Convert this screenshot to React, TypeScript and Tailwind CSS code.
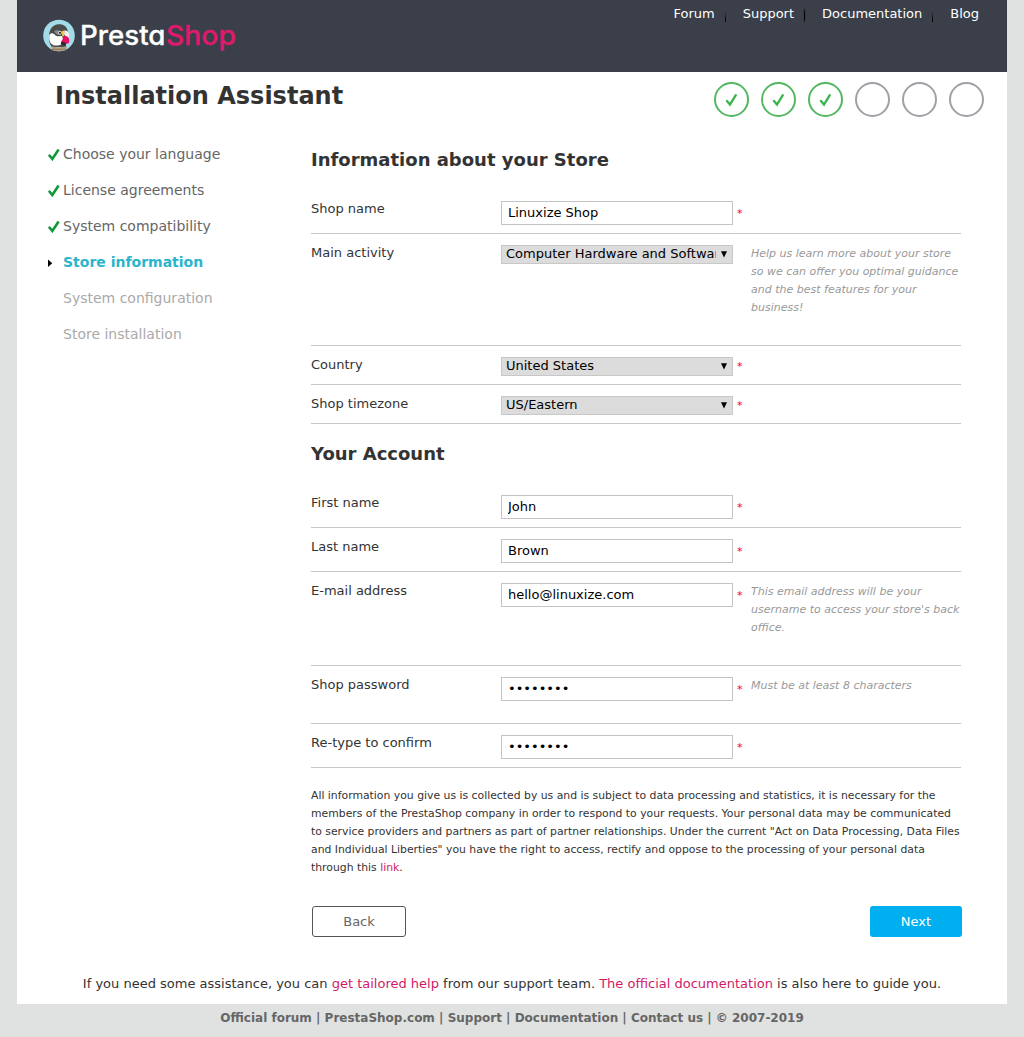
import type { ReactNode } from 'react';

function Logo() {
  return (
    <svg width="200" height="40" viewBox="0 0 200 40" role="img" aria-label="PrestaShop">
      <defs>
        <clipPath id="badge">
          <circle cx="17" cy="17.5" r="15.8" />
        </clipPath>
      </defs>
      <circle cx="17" cy="17.5" r="15.8" fill="#a4dbe8" />
      <g clipPath="url(#badge)">
        <path d="M7 20C6.500 12 10.500 6.300 17 6.300C22 6.300 25 9 25.800 13L24 20V29H10C8 27 7 24 7 20Z" fill="#4a4b4b" />
        <path d="M7.300 17C9 14.500 11.500 15 13.500 17.500C15.500 19 18 17.500 20 18L21 21L20 26C16 28.500 11 28 8.500 25C7.300 23 7 20 7.300 17Z" fill="#fff" />
        <path d="M12 13.200C14 11.800 17 12 19.500 13.800L19 16.800C16.500 17.500 14 16.500 12 13.200Z" fill="#85888a" />
        <path d="M20 13L22.300 12.500L23 16L20.800 19L20 17Z" fill="#f3c74f" />
        <path d="M22.300 12.500C25.500 12 27.500 14.500 27 19L24 19.500L22.500 17Z" fill="#eef3f2" />
        <path d="M22.800 17.500C26.500 18.500 28 21 27 25L24.500 25.800L19.300 23.500Z" fill="#ea1064" />
        <path d="M19.300 23.200L24.500 25.300L23 27.500L18.800 26.500Z" fill="#34242b" />
        <path d="M9.500 28.300C14 29.800 20 29.800 24.500 28.300V35H9.500Z" fill="#b39a7c" />
        <path d="M9.500 31.300H24.500" stroke="#806c56" strokeWidth="0.700" />
        <circle cx="18" cy="14.800" r="1.700" fill="#fff" />
        <circle cx="18" cy="14.800" r="1.100" fill="#222" />
      </g>
      <g
        className="[font-feature-settings:'cv11']"
        fontFamily="Inter, sans-serif"
        fontSize="27"
        fontWeight="500"
        strokeWidth="0.300"
        strokeLinejoin="round"
      >
        <text x="38" y="27" textLength="85.500" lengthAdjust="spacingAndGlyphs" fill="#fff" stroke="#fff">
          Presta
        </text>
        <text x="124" y="27" textLength="70" lengthAdjust="spacingAndGlyphs" fill="#df1a6c" stroke="#df1a6c">
          Shop
        </text>
      </g>
    </svg>
  );
}

function Separator({ thick }: { thick?: boolean }) {
  return (
    <span
      className={
        thick
          ? 'mt-1 mr-[17px] ml-[10px] h-[13px] w-px bg-gradient-to-b from-[#20242a] via-black to-[#20242a] shadow-[0_0_1px_black]'
          : 'mt-1 mr-[17px] ml-[10px] h-[13px] w-px bg-gradient-to-b from-[#454b55] via-[#20242a] to-black'
      }
    />
  );
}

const STEPS = [
  { label: 'Choose your language', state: 'done' },
  { label: 'License agreements', state: 'done' },
  { label: 'System compatibility', state: 'done' },
  { label: 'Store information', state: 'current' },
  { label: 'System configuration', state: 'todo' },
  { label: 'Store installation', state: 'todo' },
];

function StepMarker({ state }: { state: string }) {
  if (state === 'done') {
    return (
      <svg className="mt-[2px]" width="12" height="14" viewBox="0 0 12 14" fill="none">
        <path d="M0.800 7.800L4.300 12L10.600 2.500" stroke="#0f9a3a" strokeWidth="2.600" />
      </svg>
    );
  }
  if (state === 'current') {
    return (
      <svg className="mt-[3px]" width="12" height="14" viewBox="0 0 12 14">
        <path d="M0 3.500L4.200 7.200L0 11Z" fill="#000" />
      </svg>
    );
  }
  return null;
}

function Row({ label, height, hint, required, children }: {
  label: string;
  height: string;
  hint?: string;
  required?: 'field' | 'select';
  children: ReactNode;
}) {
  return (
    <div className={`flex border-b border-[#c8c8c8] ${height}`}>
      <label className="w-[190px] pt-[10px] leading-[18px]">{label}</label>
      <div className="w-[232px] pt-[11px]">{children}</div>
      <div
        className={`w-[18px] pl-[4px] text-[11px] leading-[18px] text-[#ff0011] ${
          required === 'select' ? 'pt-[12px]' : 'pt-[15px]'
        }`}
      >
        {required ? '*' : ''}
      </div>
      <p className="w-[210px] pt-[11px] text-[11px] leading-[18px] text-[#999] italic">{hint}</p>
    </div>
  );
}

function Field({ value, type = 'text' }: { value: string; type?: string }) {
  return (
    <input
      type={type}
      defaultValue={value}
      className="block h-6 w-full border border-[#c4c4c4] bg-white px-1.5 pb-0.5 text-[13px] text-black outline-none"
    />
  );
}

function Choice({ value }: { value: string }) {
  return (
    <div className="relative h-[19px]">
      <select className="block h-[19px] w-full appearance-none border border-[#c8c8c8] bg-[#dcdcdc] pr-[16px] pb-0.5 pl-1 text-[13px] leading-[15px] text-black outline-none">
        <option>{value}</option>
      </select>
      <svg className="pointer-events-none absolute top-[6px] right-[6px]" width="6" height="7" viewBox="0 0 6 7">
        <path d="M0 0.300H6L3 6.500Z" fill="#000" />
      </svg>
    </div>
  );
}

export default function App() {
  return (
    <div className="h-[1037px] bg-[#e0e2e1] px-[17px] font-['DejaVu_Sans',sans-serif] text-[13px] text-[#333]">
      <div className="h-[1004px] bg-white">
        <header className="flex h-[72px] justify-between bg-[#3a3f49] pl-[25px]">
          <div className="pt-[18px]">
            <Logo />
          </div>
          <nav className="flex pt-[5px] pr-7 leading-[18px] text-white">
            <a>Forum</a>
            <Separator />
            <a>Support</a>
            <Separator thick />
            <a>Documentation</a>
            <Separator />
            <a>Blog</a>
          </nav>
        </header>

        <div className="flex h-[74px] justify-between pr-[23px] pl-[38px]">
          <h1 className="pt-[9px] text-[24px] leading-[30px] font-bold">Installation Assistant</h1>
          <div className="flex gap-3 pt-[10px]">
            {STEPS.map((step) => (
              <svg key={step.label} width="35" height="35" viewBox="0 0 35 35" fill="none">
                <circle
                  cx="17.500"
                  cy="17.500"
                  r="16.500"
                  stroke={step.state === 'done' ? '#53b862' : '#a0a1a6'}
                  strokeWidth="2"
                />
                {step.state === 'done' && (
                  <path d="M13 19L16 22.600L21.800 13.200" stroke="#39b54a" strokeWidth="2.300" strokeLinecap="round" />
                )}
              </svg>
            ))}
          </div>
        </div>

        <div className="flex h-[814px] pl-[31px]">
          <ol className="-mt-px w-[263px] text-[14px] leading-[18px]">
            {STEPS.map((step) => (
              <li key={step.label} className="flex h-9">
                <span className="w-[15px]">
                  <StepMarker state={step.state} />
                </span>
                <span
                  className={
                    step.state === 'current'
                      ? 'font-bold text-[#2bb5cb]'
                      : step.state === 'done'
                        ? 'text-[#666]'
                        : 'text-[#aaa]'
                  }
                >
                  {step.label}
                </span>
              </li>
            ))}
          </ol>

          <main className="w-[650px]">
            <h2 className="h-11 pt-[2px] text-[18px] leading-6 font-bold">Information about your Store</h2>
            <Row label="Shop name" height="h-11" required="field">
              <Field value="Linuxize Shop" />
            </Row>
            <Row
              label="Main activity"
              height="h-28"
              hint="Help us learn more about your store so we can offer you optimal guidance and the best features for your business!"
            >
              <Choice value="Computer Hardware and Software" />
            </Row>
            <Row label="Country" height="h-[39px]" required="select">
              <Choice value="United States" />
            </Row>
            <Row label="Shop timezone" height="h-[39px]" required="select">
              <Choice value="US/Eastern" />
            </Row>

            <h2 className="h-[60px] pt-[18px] text-[18px] leading-6 font-bold">Your Account</h2>
            <Row label="First name" height="h-11" required="field">
              <Field value="John" />
            </Row>
            <Row label="Last name" height="h-11" required="field">
              <Field value="Brown" />
            </Row>
            <Row
              label="E-mail address"
              height="h-[94px]"
              required="field"
              hint="This email address will be your username to access your store's back office."
            >
              <Field value="hello@linuxize.com" />
            </Row>
            <Row label="Shop password" height="h-[58px]" required="field" hint="Must be at least 8 characters">
              <Field value="password" type="password" />
            </Row>
            <Row label="Re-type to confirm" height="h-11" required="field">
              <Field value="password" type="password" />
            </Row>

            <p className="mt-[19px] text-[10.83px] leading-[18px]">
              All information you give us is collected by us and is subject to data processing and statistics, it is
              necessary for the members of the PrestaShop company in order to respond to your requests. Your personal
              data may be communicated to service providers and partners as part of partner relationships. Under the
              current "Act on Data Processing, Data Files and Individual Liberties" you have the right to access,
              rectify and oppose to the processing of your personal data through this{' '}
              <a className="text-[#cf1a66]">link</a>.
            </p>

            <div className="mt-[29px] -mr-px ml-px flex justify-between">
              <button className="h-[31px] w-[94px] rounded-[3px] border border-[#555] bg-white text-[#666]">
                Back
              </button>
              <button className="h-[31px] w-[92px] rounded-[3px] bg-[#00aff0] text-white">Next</button>
            </div>
          </main>
        </div>

        <p className="pt-[15px] text-center leading-[18px]">
          If you need some assistance, you can <a className="text-[#cf1a66]">get tailored help</a> from our support
          team. <a className="text-[#cf1a66]">The official documentation</a> is also here to guide you.
        </p>
      </div>

      <footer className="pt-[5px] text-center text-[12px] leading-[18px] font-bold text-[#666]">
        <a>Official forum</a> | <a>PrestaShop.com</a> | <a>Support</a> | <a>Documentation</a> | <a>Contact us</a> | ©
        2007-2019
      </footer>
    </div>
  );
}
